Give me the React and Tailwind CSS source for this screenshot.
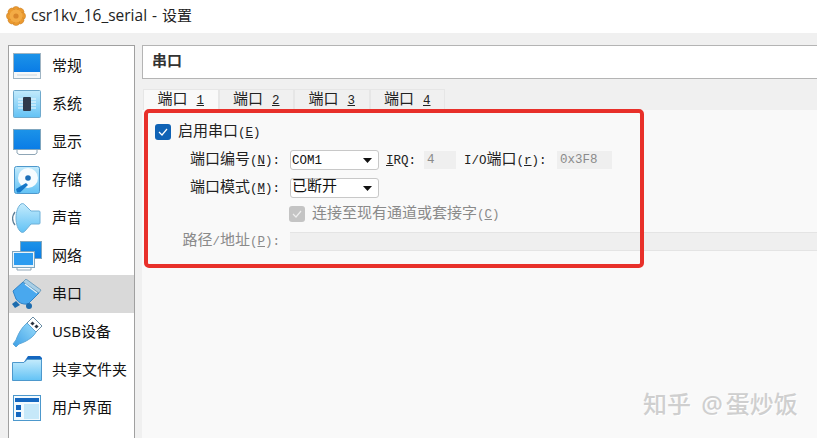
const CJK = '"Noto Sans CJK SC"';

const GearIcon = () => (
  <svg width="20" height="20" viewBox="0 0 20 20">
    {[0, 45, 90, 135, 180, 225, 270, 315].map((a) => (
      <circle key={a} cx="10" cy="4" r="3.600" fill="#eb9a2f" stroke="#c9802a" strokeWidth="0.500" transform={`rotate(${a} 10 10)`} />
    ))}
    <circle cx="10" cy="10" r="6.500" fill="#f3ab45" />
    <circle cx="10" cy="10" r="2.600" fill="#d9862a" />
  </svg>
);

const GradDefs = () => (
  <svg width="0" height="0" className="absolute">
    <defs>
      <linearGradient id="blue" x1="0" y1="0" x2="0" y2="1">
        <stop offset="0" stopColor="#1c93e8" />
        <stop offset="1" stopColor="#0a7ce6" />
      </linearGradient>
      <linearGradient id="sky" x1="0" y1="0" x2="0" y2="1">
        <stop offset="0" stopColor="#c4ebfc" />
        <stop offset="1" stopColor="#62c2f5" />
      </linearGradient>
      <linearGradient id="drop" x1="1" y1="0" x2="0" y2="1">
        <stop offset="0" stopColor="#9adcfb" />
        <stop offset="1" stopColor="#3c9fe6" />
      </linearGradient>
    </defs>
  </svg>
);

const icons = {
  general: (
    <>
      <rect x="1.500" y="2.500" width="27" height="25" fill="#f4f7f9" stroke="#9fb4c3" />
      <rect x="2" y="3" width="26" height="18" fill="url(#blue)" />
      <rect x="5" y="23" width="20" height="2" fill="#dfe6eb" />
    </>
  ),
  system: (
    <>
      <rect x="1.500" y="1.500" width="27" height="27" rx="1" fill="url(#sky)" stroke="#6fa9cc" />
      <path d="M6 10h18M6 13h18M6 16h18M6 19h18" stroke="#f2fbff" strokeWidth="1" />
      <rect x="11" y="8" width="8" height="14" rx="1" fill="#2f3a4c" />
    </>
  ),
  display: (
    <>
      <path d="M5 22h20v4l-2 1.500H7L5 26z" fill="#fff" stroke="#8fa6b6" />
      <rect x="1.500" y="2.500" width="27" height="20" fill="url(#blue)" stroke="#7fa6bf" />
    </>
  ),
  storage: (
    <>
      <rect x="2.500" y="1.500" width="25" height="27" rx="2" fill="url(#sky)" stroke="#4d98cc" />
      <circle cx="16" cy="13" r="10" fill="#f6fcff" />
      <circle cx="16" cy="13" r="2.800" fill="#1c6fb8" />
      <path d="M4 24l10-6 2 2-8 7.500H5z" fill="#1578c9" />
    </>
  ),
  audio: (
    <>
      <path d="M3 9C0 13 0 18 3 22" fill="none" stroke="#5c7f98" strokeWidth="1.300" />
      <path d="M9 1c-3 2-5 8-5 14s2 12 5 14c2 1 3 0 4-1l6-7h8q1 0 1-1V9q0-1-1-1h-8l-6-6c-1-1-2-2-4-1z" fill="url(#sky)" stroke="#6fb0d8" />
    </>
  ),
  network: (
    <>
      <rect x="8.500" y="0.500" width="21" height="17" fill="url(#blue)" stroke="#7fa6bf" />
      <path d="M5 26h14v3H5z" fill="#fff" stroke="#8fa6b6" />
      <rect x="0.500" y="10.500" width="22" height="16" fill="#e8f4fb" stroke="#7fa6bf" />
      <rect x="2" y="12" width="19" height="12" fill="#2c9cf0" />
    </>
  ),
  serial: (
    <>
      <path d="M1 12L11 3l16 11-11 11q-8 1-12-5z" fill="#49a8ee" stroke="#2f83c8" />
      <path d="M11 3l3-3 15 11-2 3z" fill="#a9cfe6" stroke="#5d93b8" strokeWidth="0.800" />
      <path d="M13 5l12 9" stroke="#e4f1f8" strokeWidth="1.200" />
      <path d="M0 25l4-3 4 4-5 3z" fill="#1d6cae" />
      <circle cx="17" cy="27" r="3" fill="#1d6cae" />
    </>
  ),
  usb: (
    <>
      <path d="M21 0l9 9-6 6-9-9z" fill="#fff" stroke="#6a8da5" />
      <rect x="19" y="5" width="3" height="3" fill="#2b3340" transform="rotate(45 20.500 6.500)" />
      <rect x="23" y="8" width="3" height="3" fill="#2b3340" transform="rotate(45 24.500 9.500)" />
      <path d="M15 6l9 9c-3 6-11 10-17 12l-3 3-3-3 3-4c2-6 6-13 11-17z" fill="url(#drop)" stroke="#5fa8d8" />
    </>
  ),
  folder: (
    <>
      <path d="M12 7l4-6h12l2 2v4z" fill="#1467c0" />
      <path d="M0.500 7.500H12l3-3h14.500v21H.500z" fill="url(#sky)" stroke="#4d98cc" />
    </>
  ),
  ui: (
    <>
      <rect x="1.500" y="2.500" width="27" height="25" fill="#f2fafe" stroke="#4d98cc" />
      <rect x="3" y="5" width="24" height="4" fill="#1467c0" />
      <rect x="4" y="12" width="5" height="5" fill="#1467c0" />
      <rect x="4" y="19" width="5" height="5" fill="#1467c0" />
      <rect x="12" y="11" width="15" height="15" fill="#c6e8f9" />
    </>
  ),
};

const NAV = [
  ['general', '常规'],
  ['system', '系统'],
  ['display', '显示'],
  ['storage', '存储'],
  ['audio', '声音'],
  ['network', '网络'],
  ['serial', '串口'],
  ['usb', 'USB设备'],
  ['folder', '共享文件夹'],
  ['ui', '用户界面'],
];

const NavItem = ({ icon, label, active }) => (
  <div className={`flex h-[38px] items-center pl-[3px] ${active ? 'bg-[#d9d9d9]' : ''}`}>
    <svg width="30" height="30" viewBox="0 0 30 30" className="shrink-0">
      {icons[icon]}
    </svg>
    <span className="ml-[10px] whitespace-nowrap pb-[2px] text-[15px] text-[#111]">{label}</span>
  </div>
);

const Arrow = () => (
  <svg width="9" height="5" viewBox="0 0 9 5" className="shrink-0">
    <path d="M0 0h9L4.500 5z" fill="#111" />
  </svg>
);

const Select = ({ children, mono }) => (
  <div className="flex h-[20px] w-[89px] items-center justify-between rounded-[3px] border border-[#c8c8c8] bg-white pl-[1px] pr-[6px] text-[15px] text-[#111]">
    <span className={mono ? 'pt-[2px] text-[12.500px]' : 'pt-[1px]'}>{children}</span>
    <Arrow />
  </div>
);

// mnemonic letter in brackets, latin part is narrower than the CJK text
const Mnemonic = ({ letter, colon }) => (
  <span className="text-[12.500px]">
    (<span className="underline">{letter}</span>){colon ? ':' : ''}
  </span>
);

const Label = ({ children, letter, disabled }) => (
  <span className={`w-[128px] shrink-0 whitespace-pre pr-[3px] pt-[3px] text-right text-[15px] ${disabled ? 'text-[#8a8a8a]' : 'text-[#222]'}`}>
    {children}
    <Mnemonic letter={letter} colon />
  </span>
);

const CheckBox = ({ disabled }) => (
  <span className={`flex h-[16px] w-[16px] shrink-0 items-center justify-center rounded-[3px] ${disabled ? 'bg-[#c4c4c4]' : 'bg-[#0f62b5]'}`}>
    <svg width="10" height="8" viewBox="0 0 10 8">
      <path d="M1 4l3 3 5-6" fill="none" stroke={disabled ? '#eee' : '#fff'} strokeWidth="1.200" />
    </svg>
  </span>
);

const ReadOnly = ({ value, width }) => (
  <div className={`flex h-[18px] items-center bg-[#efefef] px-[3px] pt-[1px] text-[12.500px] text-[#8a8a8a] ${width}`}>
    {value}
  </div>
);

export default function App() {
  return (
    <div
      className="relative h-[438px] w-[817px] overflow-hidden bg-[#f0f0f0]"
      style={{ fontFamily: `"Liberation Mono", ${CJK}, monospace` }}
    >
      <GradDefs />
      {/* title bar */}
      <div
        className="flex h-[33px] items-center bg-white pb-[2px] pl-[6px]"
        style={{ fontFamily: `"Open Sans", ${CJK}, sans-serif` }}
      >
        <GearIcon />
        <span className="ml-[5px] text-[15px] text-[#222] [word-spacing:1px]">
          <span className="text-[15.500px]">csr1kv_16_serial - </span>设置
        </span>
      </div>

      <div className="flex gap-[7px] pl-[8px] pt-[12px]">
        {/* left nav */}
        <div
          className="h-[400px] w-[127px] shrink-0 border border-[#a0a0a0] bg-white pt-[1px]"
          style={{ fontFamily: `"Noto Sans", ${CJK}, sans-serif` }}
        >
          {NAV.map(([icon, label]) => (
            <NavItem key={icon} icon={icon} label={label} active={icon === 'serial'} />
          ))}
        </div>

        <div className="min-w-0 flex-1">
          {/* section header */}
          <div className="flex h-[34px] items-center border border-r-0 border-[#b4b4b4] bg-white pl-[9px] pt-[2px] text-[15px] font-bold text-[#333]">
            串口
          </div>

          {/* tabs */}
          <div className="mt-[10px] flex h-[21px] pl-[1px]">
            {['1', '2', '3', '4'].map((n, i) => (
              <div
                key={n}
                className={`flex h-[21px] w-[75.500px] items-center justify-center whitespace-nowrap border border-b-0 border-[#e6e6e6] pt-[2px] text-[15px] text-[#222] ${i === 0 ? 'bg-[#f9f9f9]' : 'bg-[#f0f0f0]'}`}
              >
                端口&nbsp;<span className="text-[12.500px] underline">{n}</span>
              </div>
            ))}
          </div>

          {/* page */}
          <div className="relative h-[330px] bg-[#f9f9f9] pl-[13px] pt-[8px]">
            <div className="flex h-[28px] items-center">
              <CheckBox />
              <span className="ml-[7px] pt-[3px] text-[15px] text-[#222]">
                启用串口
                <Mnemonic letter="E" />
              </span>
            </div>

            <div className="flex h-[28px] items-center">
              <Label letter="N">端口编号</Label>
              <div className="ml-[7px]">
                <Select mono>COM1</Select>
              </div>
              <span className="ml-[7px] w-[38px] shrink-0 pt-[2px] text-[12.500px] text-[#222]">
                <span className="underline">I</span>RQ:
              </span>
              <ReadOnly value="4" width="w-[32px]" />
              <span className="ml-[8px] w-[93px] shrink-0 whitespace-pre pt-[3px] text-[15px] text-[#222]">
                <span className="text-[12.500px]">I/O</span>端口
                <Mnemonic letter="r" colon />
              </span>
              <ReadOnly value="0x3F8" width="w-[55px]" />
            </div>

            <div className="flex h-[28px] items-center">
              <Label letter="M">端口模式</Label>
              <div className="ml-[7px]">
                <Select>已断开</Select>
              </div>
            </div>

            <div className="flex h-[24px] items-center pl-[134px]">
              <CheckBox disabled />
              <span className="ml-[7px] whitespace-nowrap pt-[3px] text-[15px] text-[#8a8a8a]">
                连接至现有通道或套接字
                <Mnemonic letter="C" />
              </span>
            </div>

            <div className="mt-[2px] flex h-[26px] items-center">
              <Label letter="P" disabled>
                路径<span className="text-[12.500px]">/</span>地址
              </Label>
              <div className="ml-[7px] h-[19px] flex-1 border-y border-[#e4e4e4] bg-[#efefef]" />
            </div>

            {/* red annotation box */}
            <div className="pointer-events-none absolute left-[2px] top-[-1px] h-[159px] w-[500px] rounded-[5px] border-[4px] border-[#e8302a]" />
          </div>
        </div>
      </div>

      {/* watermark */}
      <div
        className="absolute left-[643px] top-[386px] whitespace-nowrap text-[24px] font-medium text-[#cfcfcf] [word-spacing:4px]"
        style={{ fontFamily: `"Noto Sans", ${CJK}, sans-serif`, textShadow: '1px 1px 0 #fff' }}
      >
        知乎 <span className="mr-[3px]">@</span>蛋炒饭
      </div>
    </div>
  );
}
